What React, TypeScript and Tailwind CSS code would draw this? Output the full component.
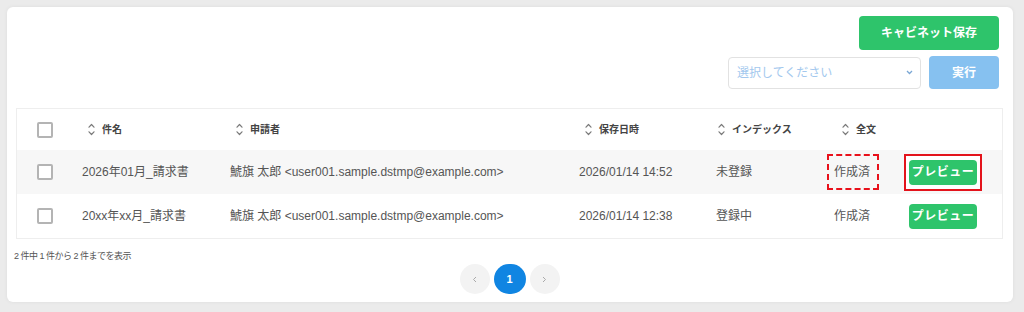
import React from 'react';

const rows = [
  {
    title: '2026年01月_請求書',
    applicant: '鯱旗 太郎 <user001.sample.dstmp@example.com>',
    savedAt: '2026/01/14 14:52',
    index: '未登録',
    fulltext: '作成済',
    highlight: true,
  },
  {
    title: '20xx年xx月_請求書',
    applicant: '鯱旗 太郎 <user001.sample.dstmp@example.com>',
    savedAt: '2026/01/14 12:38',
    index: '登録中',
    fulltext: '作成済',
    highlight: false,
  },
];

const cols = 'grid grid-cols-[55px_148px_349px_137px_118px_73px_1fr] items-center';

function SortIcon() {
  return (
    <svg width="7" height="13" viewBox="0 0 7 13" fill="none" stroke="#7a7a7a" strokeWidth="1.2" strokeLinecap="round" strokeLinejoin="round">
      <path d="M1 4.2 L3.5 1.5 L6 4.2" />
      <path d="M1 8.8 L3.5 11.5 L6 8.8" />
    </svg>
  );
}

function Checkbox() {
  return <div className="w-4 h-4 border-2 border-[#b4b4b4] rounded-[2px] bg-white" />;
}

function HeaderCell({ label, pl }: { label: string; pl: string }) {
  return (
    <div className={`flex items-center gap-[7px] ${pl}`}>
      <SortIcon />
      <span className="text-[10px] font-bold text-[#444]">{label}</span>
    </div>
  );
}

function PreviewButton() {
  return (
    <button className="h-[25px] w-[68px] rounded-[4px] bg-[#2ec46b] text-white text-[12px] font-bold tracking-[0.5px]">
      プレビュー
    </button>
  );
}

export default function App() {
  return (
    <main
      className="w-[1024px] h-[312px] bg-[#ebebeb] pt-[7px] pl-[7px] pr-[11px]"
      style={{ fontFamily: '"Liberation Sans", "Noto Sans CJK JP", sans-serif' }}
    >
      <div className="bg-white rounded-[6px] shadow-[0_0_4px_rgba(0,0,0,0.06)] pt-[9px] pl-[9px] pr-[10px] pb-[8px]">
        {/* actions */}
        <div className="flex flex-col items-end pr-[4px]">
          <button className="h-[34px] w-[140px] rounded-[4px] bg-[#2ec46b] text-white text-[12px] font-bold">
            キャビネット保存
          </button>
          <div className="mt-[6px] flex items-center gap-[8px]">
            <div className="h-[32px] w-[193px] border border-[#e2e2e2] rounded-[4px] flex items-center justify-between pl-[8px] pr-[7px]">
              <span className="text-[12px] text-[#a3c8ee]">選択してください</span>
              <svg width="7" height="5" viewBox="0 0 7 5" fill="none" stroke="#7aa7d4" strokeWidth="1.3">
                <path d="M1 1 L3.5 3.5 L6 1" />
              </svg>
            </div>
            <button className="h-[33px] w-[70px] rounded-[4px] bg-[#86c1f0] text-white text-[12px] font-bold">
              実行
            </button>
          </div>
        </div>

        {/* table */}
        <div className="mt-[19px] border border-[#eeeeee]">
          <div className={`${cols} h-[41px] bg-white`}>
            <div className="flex justify-center">
              <Checkbox />
            </div>
            <HeaderCell label="件名" pl="pl-[16px]" />
            <HeaderCell label="申請者" pl="pl-[16px]" />
            <HeaderCell label="保存日時" pl="pl-[16px]" />
            <HeaderCell label="インデックス" pl="pl-[12px]" />
            <HeaderCell label="全文" pl="pl-[18px]" />
            <div />
          </div>
          {rows.map((r, i) => (
            <div
              key={i}
              className={`${cols} h-[44px] text-[12px] text-[#555] ${i === 0 ? 'bg-[#f7f7f7]' : 'bg-white'}`}
            >
              <div className="flex justify-center">
                <Checkbox />
              </div>
              <div className="pl-[10px]">{r.title}</div>
              <div className="pl-[10px] whitespace-nowrap">{r.applicant}</div>
              <div className="pl-[10px]">{r.savedAt}</div>
              <div className="pl-[10px]">{r.index}</div>
              <div className="pl-[10px]">
                {r.highlight ? (
                  <div className="-ml-[7px] w-[52px] h-[36px] border-2 border-dashed border-[#e8101a] flex items-center pl-[5px]">
                    {r.fulltext}
                  </div>
                ) : (
                  r.fulltext
                )}
              </div>
              <div className="pl-[12px]">
                {r.highlight ? (
                  <div className="-ml-[5px] w-[78px] h-[37px] border-2 border-[#e3131b] bg-white flex items-center justify-center">
                    <PreviewButton />
                  </div>
                ) : (
                  <PreviewButton />
                )}
              </div>
            </div>
          ))}
        </div>

        {/* footer */}
        <div className="mt-[11px] -ml-[2px] text-[9px] leading-[12px] tracking-[-0.5px] text-[#555]">
          2 件中 1 件から 2 件までを表示
        </div>
        <div className="mt-[2px] flex justify-center gap-[4px]">
          <div className="w-[30px] h-[30px] rounded-full bg-[#f3f3f3] flex items-center justify-center">
            <svg width="5" height="7" viewBox="0 0 5 7" fill="none" stroke="#aaa" strokeWidth="1">
              <path d="M4 1 L1.5 3.5 L4 6" />
            </svg>
          </div>
          <div className="w-[32px] h-[30px] rounded-full bg-[#1085e2] flex items-center justify-center text-white text-[11px] font-bold">
            1
          </div>
          <div className="w-[30px] h-[30px] rounded-full bg-[#f3f3f3] flex items-center justify-center">
            <svg width="5" height="7" viewBox="0 0 5 7" fill="none" stroke="#aaa" strokeWidth="1">
              <path d="M1 1 L3.5 3.5 L1 6" />
            </svg>
          </div>
        </div>
      </div>
    </main>
  );
}
